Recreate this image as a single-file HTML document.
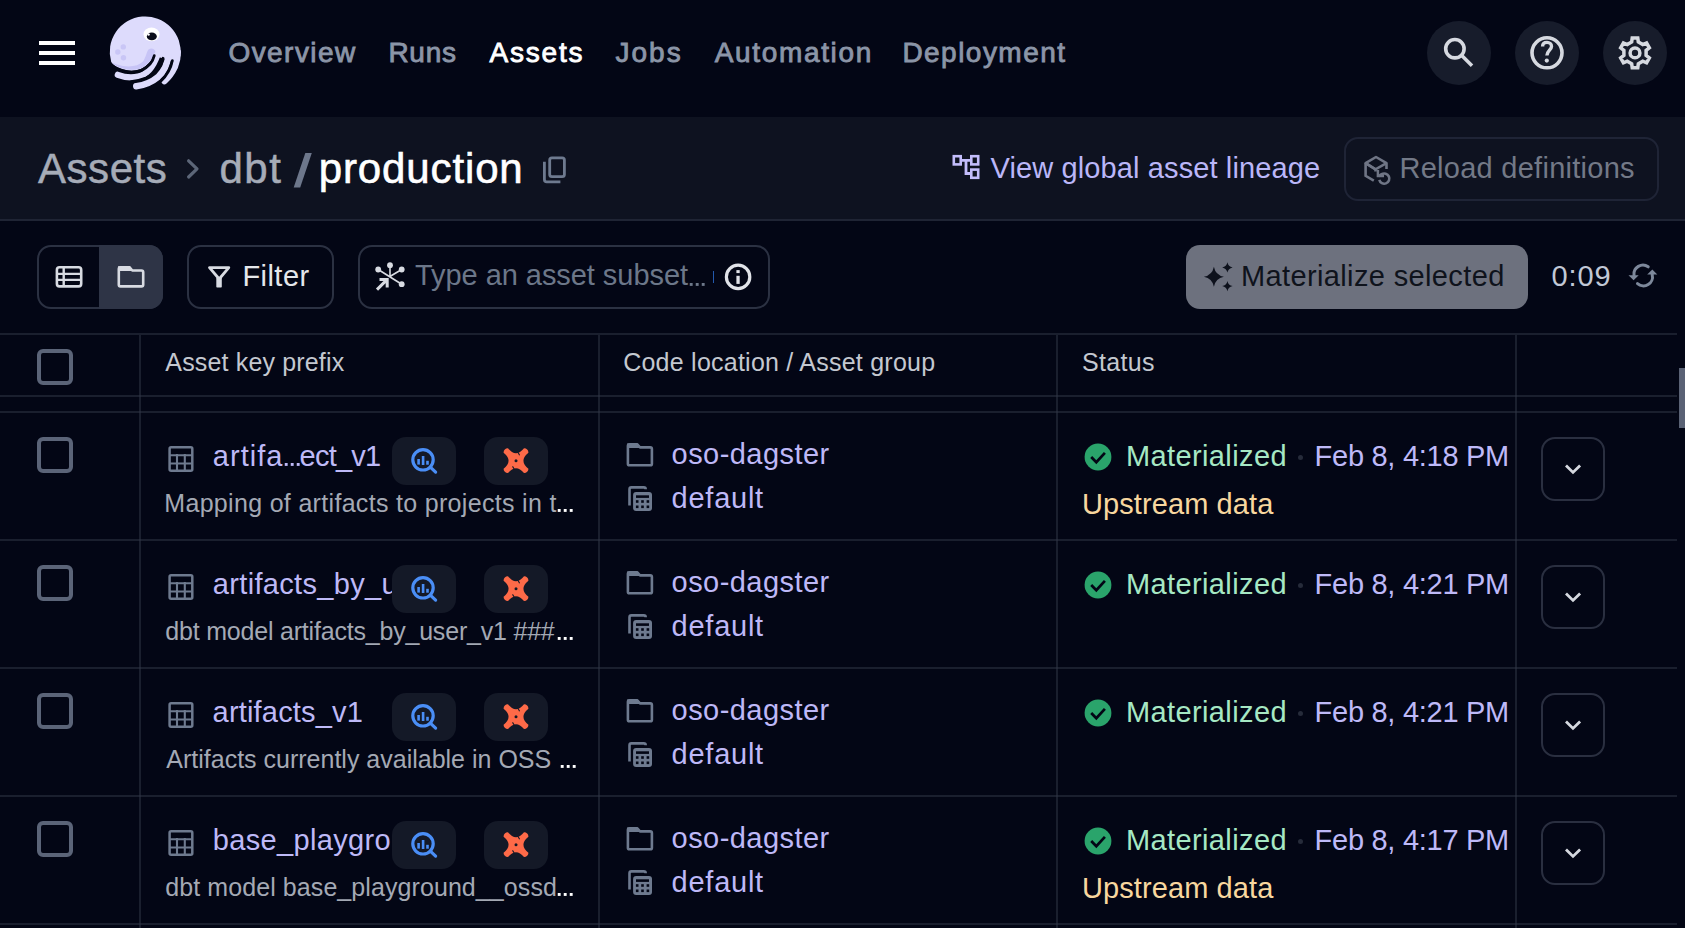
<!DOCTYPE html>
<html><head><meta charset="utf-8">
<style>
*{box-sizing:border-box;margin:0;padding:0}
html,body{width:1685px;height:928px;overflow:hidden;background:#030615;font-family:"Liberation Sans",sans-serif}
.a{position:absolute;white-space:pre;line-height:1}
.b{position:absolute}
.circ{position:absolute;top:21px;width:64px;height:64px;border-radius:32px;background:#171c2b}
.vl{position:absolute;width:2px;background:rgba(49,56,71,0.5)}
.hl{position:absolute;height:2px;background:rgba(49,56,71,0.5)}
.cb{position:absolute;left:37px;width:36px;height:36px;border:4px solid #5b6478;border-radius:6px}
.tag{position:absolute;width:64px;height:48px;border-radius:14px;background:#141927}
.dd{position:absolute;left:1541px;width:64px;height:64px;border:2px solid #2a2f40;border-radius:14px}
.clip{position:absolute;overflow:hidden}
svg{position:absolute;left:0;top:0}
</style></head><body>
<div class="b" style="left:0;top:117px;width:1685px;height:102px;background:#0e1220"></div>
<div class="b" style="left:0;top:219px;width:1685px;height:2px;background:#1f2434"></div>
<div class="b" style="left:39px;top:41px;width:36px;height:4px;background:#fff"></div>
<div class="b" style="left:39px;top:51px;width:36px;height:4px;background:#fff"></div>
<div class="b" style="left:39px;top:61px;width:36px;height:4px;background:#fff"></div>
<div class="circ" style="left:1427px"></div>
<div class="circ" style="left:1515px"></div>
<div class="circ" style="left:1603px"></div>
<div class="b" style="left:1344px;top:137px;width:315px;height:64px;border:2px solid #1f2436;border-radius:14px"></div>
<div class="b" style="left:37px;top:245px;width:126px;height:64px;border:2px solid #2b3142;border-radius:14px"></div>
<div class="b" style="left:99px;top:245px;width:64px;height:64px;border-radius:0 14px 14px 0;background:#2e3446"></div>
<div class="b" style="left:187px;top:245px;width:147px;height:64px;border:2px solid #2b3142;border-radius:14px"></div>
<div class="b" style="left:358px;top:245px;width:412px;height:64px;border:2px solid #2b3142;border-radius:14px"></div>
<div class="b" style="left:712.8px;top:271.3px;width:1.2px;height:11.5px;background:#2359ad"></div>
<div class="b" style="left:1186px;top:245px;width:342px;height:64px;border-radius:14px;background:#6d717e"></div>
<div class="hl" style="left:0;top:333px;width:1677px"></div>
<div class="hl" style="left:0;top:395px;width:1677px"></div>
<div class="hl" style="left:0;top:411px;width:1677px"></div>
<div class="hl" style="left:0;top:539px;width:1677px"></div>
<div class="hl" style="left:0;top:667px;width:1677px"></div>
<div class="hl" style="left:0;top:795px;width:1677px"></div>
<div class="hl" style="left:0;top:923px;width:1677px"></div>
<div class="vl" style="left:139px;top:335px;height:593px"></div>
<div class="vl" style="left:598px;top:335px;height:593px"></div>
<div class="vl" style="left:1056px;top:335px;height:593px"></div>
<div class="vl" style="left:1515px;top:335px;height:593px"></div>
<div class="b" style="left:1679px;top:368px;width:6px;height:60px;background:#5a6275"></div>
<div class="cb" style="top:349px"></div>
<div class="a" style="left:228.40px;top:38.59px;font-size:28px;color:#8b95a7;letter-spacing:1.457px;-webkit-text-stroke:0.85px #8b95a7">Overview</div>
<div class="a" style="left:388.40px;top:38.59px;font-size:28px;color:#8b95a7;letter-spacing:0.733px;-webkit-text-stroke:0.85px #8b95a7">Runs</div>
<div class="a" style="left:489.40px;top:38.59px;font-size:28px;color:#ffffff;letter-spacing:1.840px;-webkit-text-stroke:0.85px #ffffff">Assets</div>
<div class="a" style="left:615.40px;top:38.59px;font-size:28px;color:#8b95a7;letter-spacing:2.067px;-webkit-text-stroke:0.85px #8b95a7">Jobs</div>
<div class="a" style="left:714.80px;top:38.59px;font-size:28px;color:#8b95a7;letter-spacing:1.644px;-webkit-text-stroke:0.85px #8b95a7">Automation</div>
<div class="a" style="left:902.40px;top:38.59px;font-size:28px;color:#8b95a7;letter-spacing:1.467px;-webkit-text-stroke:0.85px #8b95a7">Deployment</div>
<div class="a" style="left:38.00px;top:147.64px;font-size:42px;color:#a6acb8;letter-spacing:0.540px;-webkit-text-stroke:0.5px #a6acb8">Assets</div>
<div class="a" style="left:219.50px;top:147.64px;font-size:42px;color:#a6acb8;letter-spacing:1.500px;-webkit-text-stroke:0.5px #a6acb8">dbt</div>
<div class="a" style="left:318.70px;top:147.64px;font-size:42px;color:#ffffff;letter-spacing:0.878px;-webkit-text-stroke:0.6px #ffffff">production</div>
<div class="a" style="left:990.60px;top:154.05px;font-size:29px;color:#bab6f8;letter-spacing:0.112px;">View global asset lineage</div>
<div class="a" style="left:1399.50px;top:153.65px;font-size:29px;color:#737987;letter-spacing:0.265px;">Reload definitions</div>
<div class="a" style="left:242.40px;top:261.65px;font-size:29px;color:#e5e7eb;letter-spacing:0.460px;">Filter</div>
<div class="a" style="left:415.00px;top:261.45px;font-size:29px;color:#6c7789;letter-spacing:-0.053px;">Type an asset subset</div>
<div class="a" style="left:1241.00px;top:261.65px;font-size:29px;color:#0f131c;letter-spacing:0.368px;">Materialize selected</div>
<div class="a" style="left:1551.60px;top:262.05px;font-size:29px;color:#c1c8d6;letter-spacing:0.900px;">0:09</div>
<div class="a" style="left:165.30px;top:349.73px;font-size:25px;color:#c4c8d0;letter-spacing:0.160px;">Asset key prefix</div>
<div class="a" style="left:623.20px;top:349.73px;font-size:25px;color:#c4c8d0;letter-spacing:0.238px;">Code location / Asset group</div>
<div class="a" style="left:1082.00px;top:349.73px;font-size:25px;color:#c4c8d0;letter-spacing:0.320px;">Status</div>
<div class="a" style="left:164.30px;top:490.93px;font-size:25px;color:#a4a9b4;letter-spacing:0.314px;">Mapping of artifacts to projects in t</div>
<div class="a" style="left:671.60px;top:439.55px;font-size:29px;color:#beb8f7;letter-spacing:0.440px;">oso-dagster</div>
<div class="a" style="left:671.60px;top:483.65px;font-size:29px;color:#beb8f7;letter-spacing:0.750px;">default</div>
<div class="a" style="left:1125.90px;top:441.55px;font-size:29px;color:#a6e8c4;letter-spacing:0.391px;">Materialized</div>
<div class="a" style="left:1314.60px;top:441.55px;font-size:29px;color:#beb9f8;letter-spacing:-0.277px;">Feb 8, 4:18 PM</div>
<div class="a" style="left:1081.90px;top:490.05px;font-size:29px;color:#f8d79f;letter-spacing:0.100px;">Upstream data</div>
<div class="a" style="left:165.30px;top:618.93px;font-size:25px;color:#a4a9b4;letter-spacing:-0.200px;">dbt model artifacts_by_user_v1 ###</div>
<div class="a" style="left:671.60px;top:567.55px;font-size:29px;color:#beb8f7;letter-spacing:0.440px;">oso-dagster</div>
<div class="a" style="left:671.60px;top:611.65px;font-size:29px;color:#beb8f7;letter-spacing:0.750px;">default</div>
<div class="a" style="left:1125.90px;top:569.55px;font-size:29px;color:#a6e8c4;letter-spacing:0.391px;">Materialized</div>
<div class="a" style="left:1314.60px;top:569.55px;font-size:29px;color:#beb9f8;letter-spacing:-0.277px;">Feb 8, 4:21 PM</div>
<div class="a" style="left:166.30px;top:746.93px;font-size:25px;color:#a4a9b4;">Artifacts currently available in OSS </div>
<div class="a" style="left:671.60px;top:695.55px;font-size:29px;color:#beb8f7;letter-spacing:0.440px;">oso-dagster</div>
<div class="a" style="left:671.60px;top:739.65px;font-size:29px;color:#beb8f7;letter-spacing:0.750px;">default</div>
<div class="a" style="left:1125.90px;top:697.55px;font-size:29px;color:#a6e8c4;letter-spacing:0.391px;">Materialized</div>
<div class="a" style="left:1314.60px;top:697.55px;font-size:29px;color:#beb9f8;letter-spacing:-0.277px;">Feb 8, 4:21 PM</div>
<div class="a" style="left:165.30px;top:874.93px;font-size:25px;color:#a4a9b4;letter-spacing:0.080px;">dbt model base_playground__ossd</div>
<div class="a" style="left:671.60px;top:823.55px;font-size:29px;color:#beb8f7;letter-spacing:0.440px;">oso-dagster</div>
<div class="a" style="left:671.60px;top:867.65px;font-size:29px;color:#beb8f7;letter-spacing:0.750px;">default</div>
<div class="a" style="left:1125.90px;top:825.55px;font-size:29px;color:#a6e8c4;letter-spacing:0.391px;">Materialized</div>
<div class="a" style="left:1314.60px;top:825.55px;font-size:29px;color:#beb9f8;letter-spacing:-0.277px;">Feb 8, 4:17 PM</div>
<div class="a" style="left:1081.90px;top:874.05px;font-size:29px;color:#f8d79f;letter-spacing:0.100px;">Upstream data</div>
<div class="cb" style="top:437px"></div>
<div class="a" style="left:212.80px;top:442.05px;font-size:29px;color:#beb9f7;letter-spacing:1.040px;">artifa</div>
<div class="a" style="left:299.60px;top:442.05px;font-size:29px;color:#beb9f7;letter-spacing:-0.780px;">ect_v1</div>
<div class="tag" style="left:392px;top:437px"></div>
<div class="tag" style="left:484px;top:437px"></div>
<div class="b" style="left:1298.4px;top:455px;width:5px;height:5px;border-radius:3px;background:#262b3a"></div>
<div class="dd" style="top:437px"></div>
<div class="cb" style="top:565px"></div>
<div class="clip" style="left:200px;top:556px;width:192px;height:50px"><div class="a" style="left:12.80px;top:14.05px;font-size:29px;color:#beb9f7;letter-spacing:0.33px">artifacts_by_user_v1</div>
</div>
<div class="tag" style="left:392px;top:565px"></div>
<div class="tag" style="left:484px;top:565px"></div>
<div class="b" style="left:1298.4px;top:583px;width:5px;height:5px;border-radius:3px;background:#262b3a"></div>
<div class="dd" style="top:565px"></div>
<div class="cb" style="top:693px"></div>
<div class="a" style="left:212.60px;top:698.05px;font-size:29px;color:#beb9f7;letter-spacing:0.182px;">artifacts_v1</div>
<div class="tag" style="left:392px;top:693px"></div>
<div class="tag" style="left:484px;top:693px"></div>
<div class="b" style="left:1298.4px;top:711px;width:5px;height:5px;border-radius:3px;background:#262b3a"></div>
<div class="dd" style="top:693px"></div>
<div class="cb" style="top:821px"></div>
<div class="clip" style="left:200px;top:812px;width:192px;height:50px"><div class="a" style="left:12.80px;top:14.05px;font-size:29px;color:#beb9f7;letter-spacing:0.33px">base_playground__ossd</div>
</div>
<div class="tag" style="left:392px;top:821px"></div>
<div class="tag" style="left:484px;top:821px"></div>
<div class="b" style="left:1298.4px;top:839px;width:5px;height:5px;border-radius:3px;background:#262b3a"></div>
<div class="dd" style="top:821px"></div>
<svg width="1685" height="928" viewBox="0 0 1685 928">
<g transform="translate(100 10)">
<path d="M53.6 44.4 C52.6 49.5 48 55.5 40 59.3 C31 62.5 17 60 11.2 52 A35.5 35.5 0 1 1 80.5 46 L77 52 L70.5 50.5 L62 48 L56 46.5 Z" fill="#dddbfc"/>
<path d="M11.6 52.6 C18 58.5 30 61.5 39.5 58.7 C46.5 56.5 51.5 50 53.6 44.4 L55.6 42 C55 38.5 51 37.5 48.5 39.5 C46.5 42 46 47 43 51.5 C38 56.5 28 58 17 54.5 Z" fill="#c7c4f6"/>
<path d="M17.8 64.8 C23 66.8 31 68 38 66.6 C46 65 53 58 57.8 44" stroke="#dddbfc" stroke-width="6.2" fill="none" stroke-linecap="round"/>
<path d="M36.2 76.2 C43 75.4 52 72 58 67 C64 61.5 67.5 55 68.8 44" stroke="#dddbfc" stroke-width="6.4" fill="none" stroke-linecap="round"/>
<path d="M64.4 71.2 C68 68 72 63 74.8 57 C76.8 52 77.8 48 77.8 42" stroke="#dddbfc" stroke-width="6.4" fill="none" stroke-linecap="round"/>
<path d="M54.3 45.6 C53 51 48.5 57 41.5 60.2 C34 63 23 62.5 12 56" stroke="#030615" stroke-width="2.7" fill="none" stroke-linecap="round"/>
<path d="M63.1 48.2 C61.5 56 55.5 63.5 46 68 C41 70 36 71 31 71.5" stroke="#030615" stroke-width="2.7" fill="none" stroke-linecap="round"/>
<path d="M72.4 50.5 C71 58 67 65.5 60.5 71.5" stroke="#030615" stroke-width="2.7" fill="none" stroke-linecap="round"/>


<ellipse cx="51.5" cy="24.3" rx="8" ry="6.9" fill="#ffffff"/>
<ellipse cx="51.8" cy="26.4" rx="5" ry="3.9" fill="#0a0c1a"/>
<circle cx="48.6" cy="24.6" r="1.2" fill="#ffffff"/>
<circle cx="23.3" cy="36.9" r="2.7" fill="#c9c6f6"/>
<circle cx="17.8" cy="42" r="2.7" fill="#c9c6f6"/>
<circle cx="23.5" cy="47.7" r="2.7" fill="#c9c6f6"/>
</g>
<circle cx="1454.9" cy="48.7" r="9.2" stroke="#d6d9e0" stroke-width="3.6" fill="none"/>
<path d="M1461.5 55.3 L1472 65.8" stroke="#d6d9e0" stroke-width="3.6"/>
<circle cx="1547" cy="52.8" r="15" stroke="#d6d9e0" stroke-width="3.6" fill="none"/>
<path d="M1542.6 46.5 C1542.6 43.5 1544.6 42.4 1547 42.4 C1549.6 42.4 1551.5 44 1551.5 46.4 C1551.5 49.8 1546.9 50.6 1546.9 55.5" stroke="#d6d9e0" stroke-width="3.4" fill="none" stroke-linecap="butt"/>
<circle cx="1546.8" cy="60.6" r="2.1" fill="#d6d9e0"/>
<path d="M1638.33 42.00 L1637.77 37.95 L1632.23 37.95 L1631.67 42.00 L1627.23 44.56 L1623.44 43.03 L1620.67 47.83 L1623.89 50.34 L1623.89 55.46 L1620.67 57.97 L1623.44 62.77 L1627.23 61.24 L1631.67 63.80 L1632.23 67.85 L1637.77 67.85 L1638.33 63.80 L1642.77 61.24 L1646.56 62.77 L1649.33 57.97 L1646.11 55.46 L1646.11 50.34 L1649.33 47.83 L1646.56 43.03 L1642.77 44.56Z" stroke="#d6d9e0" stroke-width="3.5" fill="none" stroke-linejoin="miter"/>
<circle cx="1635" cy="52.9" r="4.9" stroke="#d6d9e0" stroke-width="3.5" fill="none"/>
<path d="M188.6 160.8 L197 168.9 L188.6 177" stroke="#5c6678" stroke-width="3.2" fill="none" stroke-linecap="round" stroke-linejoin="round"/>
<rect x="549.7" y="157.9" width="14.7" height="18.7" rx="2.2" stroke="#6e7a8f" stroke-width="2.8" fill="none"/>
<path d="M544.4 161.7 V179.5 Q544.4 181.9 546.8 181.9 H560.4" stroke="#6e7a8f" stroke-width="2.8" fill="none"/>
<rect x="953.8" y="156.2" width="6.9" height="8.2" stroke="#c3bdfb" stroke-width="2.6" fill="none"/>
<rect x="971.3" y="156.2" width="6.9" height="8.2" stroke="#c3bdfb" stroke-width="2.6" fill="none"/>
<rect x="971.3" y="169.6" width="6.9" height="8.2" stroke="#c3bdfb" stroke-width="2.6" fill="none"/>
<path d="M962 160.3 H970 M966 160.3 V173.5 H970" stroke="#c3bdfb" stroke-width="2.8" fill="none"/>
<path d="M1375.5 171.6 V169.3 L1365.6 163.2 L1376 157 L1386.5 163.2 V169" stroke="#6f7585" stroke-width="2.6" fill="none" stroke-linejoin="round"/>
<path d="M1365.6 163.2 V175.8 L1373.8 180.6" stroke="#6f7585" stroke-width="2.6" fill="none"/>
<path d="M1365.6 163.2 L1375.5 169.3 L1386.5 163.2" stroke="#6f7585" stroke-width="2.6" fill="none"/>
<path d="M1379.3 179.9 A5.1 5.1 0 1 0 1381.6 174.2 L1378.6 176.2" stroke="#6f7585" stroke-width="2.6" fill="none"/>
<path d="M1377.9 171.3 V176.1 H1382.8" stroke="#6f7585" stroke-width="2.5" fill="none" stroke-linecap="square"/>
<rect x="56.9" y="267.3" width="24.3" height="19.1" rx="2.6" stroke="#d8dbe2" stroke-width="2.6" fill="none"/>
<path d="M57 273.9 H81 M57 279.9 H81 M63.7 267.5 V286" stroke="#d8dbe2" stroke-width="2.4" fill="none"/>
<path d="M118.8 284 V269 Q118.8 267.3 120.5 267.3 H129.6 L132.3 270.5 H141.5 Q143.2 270.5 143.2 272.2 V284.7 Q143.2 286.4 141.5 286.4 H120.5 Q118.8 286.4 118.8 284.7Z" stroke="#d8dbe2" stroke-width="2.6" fill="none" stroke-linejoin="round"/>
<path d="M118 266.2 H130 L133.2 271 H118Z" fill="#d8dbe2"/>
<path d="M209.5 267.6 H228.8 L219.2 279 Z" stroke="#d8dbe2" stroke-width="2.8" fill="none" stroke-linejoin="round"/>
<rect x="216.3" y="277.8" width="5.5" height="9.8" rx="0.8" fill="#d8dbe2"/>
<path d="M378.2 269.5 L401.7 284.2 M390 265.2 V276.2 M390.3 276.3 L401.7 269.5" stroke="#d8dbe2" stroke-width="1.6" fill="none"/>
<circle cx="390" cy="265.2" r="2.9" fill="#d8dbe2"/>
<circle cx="378.2" cy="269.5" r="2.9" fill="#d8dbe2"/>
<circle cx="401.7" cy="269.5" r="2.9" fill="#d8dbe2"/>
<circle cx="401.7" cy="284.2" r="2.9" fill="#d8dbe2"/>
<path d="M377 289.6 L386.5 280.1 M379.5 279.5 H387.2 V287.5" stroke="#d8dbe2" stroke-width="3" fill="none"/>
<circle cx="738.1" cy="276.9" r="11.7" stroke="#e1e3e8" stroke-width="3.2" fill="none"/>
<rect x="736.4" y="270.1" width="3.3" height="3" fill="#e1e3e8"/><rect x="736.4" y="275.8" width="3.3" height="8.1" fill="#e1e3e8"/>
<path d="M1213.9 266.8 Q1215.5 275.2 1223.9 276.8 Q1215.5 278.40000000000003 1213.9 286.8 Q1212.3000000000002 278.40000000000003 1203.9 276.8 Q1212.3000000000002 275.2 1213.9 266.8Z M1227.4 262.2 Q1228.2320000000002 266.568 1232.6000000000001 267.4 Q1228.2320000000002 268.23199999999997 1227.4 272.59999999999997 Q1226.568 268.23199999999997 1222.2 267.4 Q1226.568 266.568 1227.4 262.2Z M1227.4 280.90000000000003 Q1228.2320000000002 285.26800000000003 1232.6000000000001 286.1 Q1228.2320000000002 286.932 1227.4 291.3 Q1226.568 286.932 1222.2 286.1 Q1226.568 285.26800000000003 1227.4 280.90000000000003Z" fill="#0d111c"/>
<path d="M1648.2 266.8 A9 9 0 0 0 1634 275.2" stroke="#7d889b" stroke-width="3" fill="none" stroke-linecap="round"/>
<path d="M1628.5 275.2 H1638.7 L1633.6 280.3Z" fill="#7d889b"/>
<path d="M1637.5 283.6 A9 9 0 0 0 1652.2 274.6" stroke="#7d889b" stroke-width="3" fill="none" stroke-linecap="round"/>
<path d="M1647.2 274.5 H1657.3 L1652.3 269.6Z" fill="#7d889b"/>
<rect x="169.6" y="447.3" width="22.7" height="23.4" rx="1.5" stroke="#6e7a8f" stroke-width="2.5" fill="none"/>
<path d="M169.6 455.2 H192.3 M169.6 463.5 H192.3 M177 454 V470.7 M184.8 454 V470.7" stroke="#6e7a8f" stroke-width="2.1" fill="none"/>
<rect x="169.6" y="447.3" width="22.7" height="6.5" fill="#6e7a8f" opacity="0"/>
<circle cx="423" cy="459.8" r="10.2" stroke="#4a8ef6" stroke-width="3.2" fill="none"/>
<path d="M430.3 467.1 L435.6 472.1" stroke="#4a8ef6" stroke-width="3.2" stroke-linecap="round"/>
<rect x="417.3" y="459.0" width="2.6" height="5.6" fill="#4a8ef6"/><rect x="421.8" y="456.0" width="2.6" height="9" fill="#4a8ef6"/><rect x="426.2" y="460.8" width="2.6" height="3.9" fill="#4a8ef6"/>
<g transform="translate(503 447.7)"><path d="M5 0.6 Q13 10.5 21 0.6 A4.2 4.2 0 0 1 25.4 5 Q15.5 13 25.4 21 A4.2 4.2 0 0 1 21 25.4 Q13 15.5 5 25.4 A4.2 4.2 0 0 1 0.6 21 Q10.5 13 0.6 5 A4.2 4.2 0 0 1 5 0.6Z" fill="#fe6a48"/><circle cx="13" cy="13" r="1.5" fill="#141927"/><path d="M15.1 4.9 L16.6 7.5 M9.5 18.7 L11.2 21.3" stroke="#141927" stroke-width="1.1"/></g>
<path d="M627.9 464.3 V446 Q627.9 444.4 629.5 444.4 H637.3 L640 447.4 H650.3 Q651.9 447.4 651.9 449 V463.7 Q651.9 465.3 650.3 465.3 H629.5 Q627.9 465.3 627.9 463.7Z" stroke="#6e7a8f" stroke-width="2.6" fill="none" stroke-linejoin="round"/>
<path d="M627 443.6 H637.6 L640.8 448 H627Z" fill="#6e7a8f"/>
<path d="M629.5 505.6 V489.3 Q629.5 487.4 631.4 487.4 H643.8 Q645.7 487.4 645.7 489.3" stroke="#6e7a8f" stroke-width="2.6" fill="none"/>
<rect x="633.1" y="492" width="18.9" height="18.9" rx="3" fill="#6e7a8f"/>
<rect x="636" y="495.3" width="13" height="2.6" fill="#030615"/>
<rect x="635.9000000000001" y="500.2" width="2.6" height="2.6" fill="#030615"/>
<rect x="635.9000000000001" y="505.5" width="2.6" height="2.6" fill="#030615"/>
<rect x="641.2" y="500.2" width="2.6" height="2.6" fill="#030615"/>
<rect x="641.2" y="505.5" width="2.6" height="2.6" fill="#030615"/>
<rect x="646.6" y="500.2" width="2.6" height="2.6" fill="#030615"/>
<rect x="646.6" y="505.5" width="2.6" height="2.6" fill="#030615"/>
<circle cx="1098" cy="457" r="13.4" fill="#2aa46b"/>
<path d="M1091.2 457 L1096.3 462.2 L1104.9 452.9" stroke="#030615" stroke-width="2.7" fill="none"/>
<path d="M1566 465.4 L1573 472.4 L1580.1 465.4" stroke="#d5d8df" stroke-width="2.8" fill="none"/>
<rect x="169.6" y="575.3" width="22.7" height="23.4" rx="1.5" stroke="#6e7a8f" stroke-width="2.5" fill="none"/>
<path d="M169.6 583.2 H192.3 M169.6 591.5 H192.3 M177 582 V598.7 M184.8 582 V598.7" stroke="#6e7a8f" stroke-width="2.1" fill="none"/>
<rect x="169.6" y="575.3" width="22.7" height="6.5" fill="#6e7a8f" opacity="0"/>
<circle cx="423" cy="587.8" r="10.2" stroke="#4a8ef6" stroke-width="3.2" fill="none"/>
<path d="M430.3 595.0999999999999 L435.6 600.0999999999999" stroke="#4a8ef6" stroke-width="3.2" stroke-linecap="round"/>
<rect x="417.3" y="587.0" width="2.6" height="5.6" fill="#4a8ef6"/><rect x="421.8" y="584.0" width="2.6" height="9" fill="#4a8ef6"/><rect x="426.2" y="588.8" width="2.6" height="3.9" fill="#4a8ef6"/>
<g transform="translate(503 575.7)"><path d="M5 0.6 Q13 10.5 21 0.6 A4.2 4.2 0 0 1 25.4 5 Q15.5 13 25.4 21 A4.2 4.2 0 0 1 21 25.4 Q13 15.5 5 25.4 A4.2 4.2 0 0 1 0.6 21 Q10.5 13 0.6 5 A4.2 4.2 0 0 1 5 0.6Z" fill="#fe6a48"/><circle cx="13" cy="13" r="1.5" fill="#141927"/><path d="M15.1 4.9 L16.6 7.5 M9.5 18.7 L11.2 21.3" stroke="#141927" stroke-width="1.1"/></g>
<path d="M627.9 592.3 V574 Q627.9 572.4 629.5 572.4 H637.3 L640 575.4 H650.3 Q651.9 575.4 651.9 577 V591.7 Q651.9 593.3 650.3 593.3 H629.5 Q627.9 593.3 627.9 591.7Z" stroke="#6e7a8f" stroke-width="2.6" fill="none" stroke-linejoin="round"/>
<path d="M627 571.6 H637.6 L640.8 576 H627Z" fill="#6e7a8f"/>
<path d="M629.5 633.6 V617.3 Q629.5 615.4 631.4 615.4 H643.8 Q645.7 615.4 645.7 617.3" stroke="#6e7a8f" stroke-width="2.6" fill="none"/>
<rect x="633.1" y="620" width="18.9" height="18.9" rx="3" fill="#6e7a8f"/>
<rect x="636" y="623.3" width="13" height="2.6" fill="#030615"/>
<rect x="635.9000000000001" y="628.2" width="2.6" height="2.6" fill="#030615"/>
<rect x="635.9000000000001" y="633.5" width="2.6" height="2.6" fill="#030615"/>
<rect x="641.2" y="628.2" width="2.6" height="2.6" fill="#030615"/>
<rect x="641.2" y="633.5" width="2.6" height="2.6" fill="#030615"/>
<rect x="646.6" y="628.2" width="2.6" height="2.6" fill="#030615"/>
<rect x="646.6" y="633.5" width="2.6" height="2.6" fill="#030615"/>
<circle cx="1098" cy="585" r="13.4" fill="#2aa46b"/>
<path d="M1091.2 585 L1096.3 590.2 L1104.9 580.9" stroke="#030615" stroke-width="2.7" fill="none"/>
<path d="M1566 593.4 L1573 600.4 L1580.1 593.4" stroke="#d5d8df" stroke-width="2.8" fill="none"/>
<rect x="169.6" y="703.3" width="22.7" height="23.4" rx="1.5" stroke="#6e7a8f" stroke-width="2.5" fill="none"/>
<path d="M169.6 711.2 H192.3 M169.6 719.5 H192.3 M177 710 V726.7 M184.8 710 V726.7" stroke="#6e7a8f" stroke-width="2.1" fill="none"/>
<rect x="169.6" y="703.3" width="22.7" height="6.5" fill="#6e7a8f" opacity="0"/>
<circle cx="423" cy="715.8" r="10.2" stroke="#4a8ef6" stroke-width="3.2" fill="none"/>
<path d="M430.3 723.0999999999999 L435.6 728.0999999999999" stroke="#4a8ef6" stroke-width="3.2" stroke-linecap="round"/>
<rect x="417.3" y="715.0" width="2.6" height="5.6" fill="#4a8ef6"/><rect x="421.8" y="712.0" width="2.6" height="9" fill="#4a8ef6"/><rect x="426.2" y="716.8" width="2.6" height="3.9" fill="#4a8ef6"/>
<g transform="translate(503 703.7)"><path d="M5 0.6 Q13 10.5 21 0.6 A4.2 4.2 0 0 1 25.4 5 Q15.5 13 25.4 21 A4.2 4.2 0 0 1 21 25.4 Q13 15.5 5 25.4 A4.2 4.2 0 0 1 0.6 21 Q10.5 13 0.6 5 A4.2 4.2 0 0 1 5 0.6Z" fill="#fe6a48"/><circle cx="13" cy="13" r="1.5" fill="#141927"/><path d="M15.1 4.9 L16.6 7.5 M9.5 18.7 L11.2 21.3" stroke="#141927" stroke-width="1.1"/></g>
<path d="M627.9 720.3 V702 Q627.9 700.4 629.5 700.4 H637.3 L640 703.4 H650.3 Q651.9 703.4 651.9 705 V719.7 Q651.9 721.3 650.3 721.3 H629.5 Q627.9 721.3 627.9 719.7Z" stroke="#6e7a8f" stroke-width="2.6" fill="none" stroke-linejoin="round"/>
<path d="M627 699.6 H637.6 L640.8 704 H627Z" fill="#6e7a8f"/>
<path d="M629.5 761.6 V745.3 Q629.5 743.4 631.4 743.4 H643.8 Q645.7 743.4 645.7 745.3" stroke="#6e7a8f" stroke-width="2.6" fill="none"/>
<rect x="633.1" y="748" width="18.9" height="18.9" rx="3" fill="#6e7a8f"/>
<rect x="636" y="751.3" width="13" height="2.6" fill="#030615"/>
<rect x="635.9000000000001" y="756.2" width="2.6" height="2.6" fill="#030615"/>
<rect x="635.9000000000001" y="761.5" width="2.6" height="2.6" fill="#030615"/>
<rect x="641.2" y="756.2" width="2.6" height="2.6" fill="#030615"/>
<rect x="641.2" y="761.5" width="2.6" height="2.6" fill="#030615"/>
<rect x="646.6" y="756.2" width="2.6" height="2.6" fill="#030615"/>
<rect x="646.6" y="761.5" width="2.6" height="2.6" fill="#030615"/>
<circle cx="1098" cy="713" r="13.4" fill="#2aa46b"/>
<path d="M1091.2 713 L1096.3 718.2 L1104.9 708.9" stroke="#030615" stroke-width="2.7" fill="none"/>
<path d="M1566 721.4 L1573 728.4 L1580.1 721.4" stroke="#d5d8df" stroke-width="2.8" fill="none"/>
<rect x="169.6" y="831.3" width="22.7" height="23.4" rx="1.5" stroke="#6e7a8f" stroke-width="2.5" fill="none"/>
<path d="M169.6 839.2 H192.3 M169.6 847.5 H192.3 M177 838 V854.7 M184.8 838 V854.7" stroke="#6e7a8f" stroke-width="2.1" fill="none"/>
<rect x="169.6" y="831.3" width="22.7" height="6.5" fill="#6e7a8f" opacity="0"/>
<circle cx="423" cy="843.8" r="10.2" stroke="#4a8ef6" stroke-width="3.2" fill="none"/>
<path d="M430.3 851.0999999999999 L435.6 856.0999999999999" stroke="#4a8ef6" stroke-width="3.2" stroke-linecap="round"/>
<rect x="417.3" y="843.0" width="2.6" height="5.6" fill="#4a8ef6"/><rect x="421.8" y="840.0" width="2.6" height="9" fill="#4a8ef6"/><rect x="426.2" y="844.8" width="2.6" height="3.9" fill="#4a8ef6"/>
<g transform="translate(503 831.7)"><path d="M5 0.6 Q13 10.5 21 0.6 A4.2 4.2 0 0 1 25.4 5 Q15.5 13 25.4 21 A4.2 4.2 0 0 1 21 25.4 Q13 15.5 5 25.4 A4.2 4.2 0 0 1 0.6 21 Q10.5 13 0.6 5 A4.2 4.2 0 0 1 5 0.6Z" fill="#fe6a48"/><circle cx="13" cy="13" r="1.5" fill="#141927"/><path d="M15.1 4.9 L16.6 7.5 M9.5 18.7 L11.2 21.3" stroke="#141927" stroke-width="1.1"/></g>
<path d="M627.9 848.3 V830 Q627.9 828.4 629.5 828.4 H637.3 L640 831.4 H650.3 Q651.9 831.4 651.9 833 V847.7 Q651.9 849.3 650.3 849.3 H629.5 Q627.9 849.3 627.9 847.7Z" stroke="#6e7a8f" stroke-width="2.6" fill="none" stroke-linejoin="round"/>
<path d="M627 827.6 H637.6 L640.8 832 H627Z" fill="#6e7a8f"/>
<path d="M629.5 889.6 V873.3 Q629.5 871.4 631.4 871.4 H643.8 Q645.7 871.4 645.7 873.3" stroke="#6e7a8f" stroke-width="2.6" fill="none"/>
<rect x="633.1" y="876" width="18.9" height="18.9" rx="3" fill="#6e7a8f"/>
<rect x="636" y="879.3" width="13" height="2.6" fill="#030615"/>
<rect x="635.9000000000001" y="884.2" width="2.6" height="2.6" fill="#030615"/>
<rect x="635.9000000000001" y="889.5" width="2.6" height="2.6" fill="#030615"/>
<rect x="641.2" y="884.2" width="2.6" height="2.6" fill="#030615"/>
<rect x="641.2" y="889.5" width="2.6" height="2.6" fill="#030615"/>
<rect x="646.6" y="884.2" width="2.6" height="2.6" fill="#030615"/>
<rect x="646.6" y="889.5" width="2.6" height="2.6" fill="#030615"/>
<circle cx="1098" cy="841" r="13.4" fill="#2aa46b"/>
<path d="M1091.2 841 L1096.3 846.2 L1104.9 836.9" stroke="#030615" stroke-width="2.7" fill="none"/>
<path d="M1566 849.4 L1573 856.4 L1580.1 849.4" stroke="#d5d8df" stroke-width="2.8" fill="none"/>
<path d="M305.3 153.1 H311.8 L300.2 187.6 H293.7Z" fill="#6d778b"/>
<rect x="689.75" y="283" width="2.9" height="2.9" fill="#6c7789"/><rect x="695.75" y="283" width="2.9" height="2.9" fill="#6c7789"/><rect x="701.75" y="283" width="2.9" height="2.9" fill="#6c7789"/>
<rect x="557.75" y="509" width="2.9" height="2.9" fill="#ffffff"/><rect x="563.75" y="509" width="2.9" height="2.9" fill="#ffffff"/><rect x="569.75" y="509" width="2.9" height="2.9" fill="#ffffff"/>
<rect x="557.75" y="637" width="2.9" height="2.9" fill="#ffffff"/><rect x="563.75" y="637" width="2.9" height="2.9" fill="#ffffff"/><rect x="569.75" y="637" width="2.9" height="2.9" fill="#ffffff"/>
<rect x="560.75" y="765" width="2.9" height="2.9" fill="#ffffff"/><rect x="566.75" y="765" width="2.9" height="2.9" fill="#ffffff"/><rect x="572.75" y="765" width="2.9" height="2.9" fill="#ffffff"/>
<rect x="557.75" y="893" width="2.9" height="2.9" fill="#ffffff"/><rect x="563.75" y="893" width="2.9" height="2.9" fill="#ffffff"/><rect x="569.75" y="893" width="2.9" height="2.9" fill="#ffffff"/>
<rect x="284.75" y="463" width="2.9" height="2.9" fill="#beb9f7"/><rect x="290.75" y="463" width="2.9" height="2.9" fill="#beb9f7"/><rect x="296.75" y="463" width="2.9" height="2.9" fill="#beb9f7"/>
</svg>
</body></html>
